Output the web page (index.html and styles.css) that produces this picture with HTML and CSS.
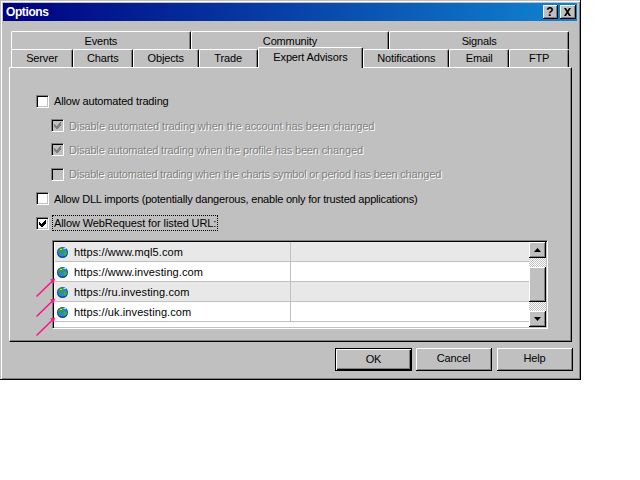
FILE: index.html
```html
<!DOCTYPE html>
<html lang="en">
<head>
<meta charset="utf-8">
<title>Options</title>
<link rel="stylesheet" href="styles.css">
</head>
<body>
<svg class="defs" width="0" height="0">
  <symbol id="globe" viewBox="0 0 11 11">
    <circle cx="5.500" cy="5.500" r="5.500" fill="#0f4a96"/>
    <circle cx="5.500" cy="5" r="4.500" fill="#2f86d6"/>
    <path d="M3 1h3v1l1 1-1 2H5v2L3 6 2 4V2.500z" fill="#2f9e2f"/>
    <path d="M7 5h3v2L8 9H7z" fill="#3fae38"/>
    <path d="M6 1h3v1H7z" fill="#a8dcf4"/>
    <path d="M3 2h2v1H3z" fill="#bfe36a"/>
  </symbol>
</svg>
<div class="window">
  <div class="titlebar">
    <span class="title">Options</span>
    <div class="caption-buttons">
      <span class="caption-btn caption-help">?</span>
      <span class="caption-btn caption-close">
        <svg width="9" height="8" viewBox="0 0 9 8"><path d="M1 0h2l1.500 2.500L6 0h2L5.500 4 8 8H6L4.500 5.500 3 8H1l2.500-4z" fill="#000"/></svg>
      </span>
    </div>
  </div>
  <div class="tabs">
    <div class="tab-row tab-row-back">
      <div class="tab w-events">Events</div>
      <div class="tab w-community">Community</div>
      <div class="tab w-signals">Signals</div>
    </div>
    <div class="tab-row">
      <div class="tab w-server">Server</div>
      <div class="tab w-charts">Charts</div>
      <div class="tab w-objects">Objects</div>
      <div class="tab w-trade">Trade</div>
      <div class="tab tab-active">Expert Advisors</div>
      <div class="tab w-notifications">Notifications</div>
      <div class="tab w-email">Email</div>
      <div class="tab w-ftp">FTP</div>
    </div>
  </div>
  <div class="panel">
    <div class="option">
      <span class="check"></span><span class="sp-mid">Allow automated trading</span>
    </div>
    <div class="option option-sub option-disabled">
      <span class="check check-disabled"><svg class="tick" width="9" height="9" viewBox="0 0 9 9"><path d="M1 3h1v1h1v1h1V4h1V3h1V2h1V1h1v3H8v1H7v1H6v1H5v1H3V7H2V6H1z" fill="#808080"/></svg></span><span class="sp-loose">Disable automated trading when the account has been changed</span>
    </div>
    <div class="option option-sub option-disabled">
      <span class="check check-disabled"><svg class="tick" width="9" height="9" viewBox="0 0 9 9"><path d="M1 3h1v1h1v1h1V4h1V3h1V2h1V1h1v3H8v1H7v1H6v1H5v1H3V7H2V6H1z" fill="#808080"/></svg></span><span class="sp-mid">Disable automated trading when the profile has been changed</span>
    </div>
    <div class="option option-sub option-disabled">
      <span class="check check-disabled"></span><span class="sp-tight">Disable automated trading when the charts symbol or period has been changed</span>
    </div>
    <div class="option">
      <span class="check"></span><span class="sp-tight">Allow DLL imports (potentially dangerous, enable only for trusted applications)</span>
    </div>
    <div class="option">
      <span class="check"><svg class="tick" width="9" height="9" viewBox="0 0 9 9"><path d="M1 3h1v1h1v1h1V4h1V3h1V2h1V1h1v3H8v1H7v1H6v1H5v1H3V7H2V6H1z" fill="#000"/></svg></span><span class="focused sp-loose">Allow WebRequest for listed URL:</span>
    </div>
    <div class="list">
      <div class="rows">
        <div class="row row-alt"><span class="cell-url"><svg class="globe"><use href="#globe"/></svg>https://www.mql5.com</span><span class="cell-rest"></span></div>
        <div class="row"><span class="cell-url"><svg class="globe"><use href="#globe"/></svg>https://www.investing.com</span><span class="cell-rest"></span></div>
        <div class="row row-alt"><span class="cell-url"><svg class="globe"><use href="#globe"/></svg>https://ru.investing.com</span><span class="cell-rest"></span></div>
        <div class="row"><span class="cell-url"><svg class="globe"><use href="#globe"/></svg>https://uk.investing.com</span><span class="cell-rest"></span></div>
      </div>
      <div class="scrollbar">
        <div class="sb-btn"><svg width="7" height="4" viewBox="0 0 7 4"><path d="M3.500 0L7 4H0z" fill="#000"/></svg></div>
        <div class="sb-track sb-track-top"></div>
        <div class="sb-btn sb-thumb"></div>
        <div class="sb-track sb-track-bottom"></div>
        <div class="sb-btn"><svg width="7" height="4" viewBox="0 0 7 4"><path d="M0 0h7L3.500 4z" fill="#000"/></svg></div>
      </div>
    </div>
  </div>
  <div class="footer">
    <div class="btn btn-default">OK</div>
    <div class="btn">Cancel</div>
    <div class="btn">Help</div>
  </div>
  <svg class="arrows" width="30" height="70" viewBox="0 0 30 70">
    <g fill="#ff1080">
      <path d="M2.500 21.500L20 4.500" fill="none" stroke="#ff1080" stroke-width="1.500"/><path d="M21 3.500l-5 1 4 4z"/>
      <path d="M2.500 41.500L20 24.500" fill="none" stroke="#ff1080" stroke-width="1.500"/><path d="M21 23.500l-5 1 4 4z"/>
      <path d="M2.500 60.500L20 43.500" fill="none" stroke="#ff1080" stroke-width="1.500"/><path d="M21 42.500l-5 1 4 4z"/>
    </g>
  </svg>
</div>
</body>
</html>
```

FILE: styles.css
```css
* { box-sizing: border-box; }
html, body { margin: 0; padding: 0; background: #fff; }
body {
  font-family: "Liberation Sans", Arial, sans-serif;
  font-size: 11px;
  color: #000;
  letter-spacing: -.15px;
}
.defs { display: block; height: 0; }
.window {
  position: relative;
  width: 581px;
  height: 380px;
  padding: 3px;
  background: #c0c0c0;
  border-right: 1px solid #000;
  border-bottom: 1px solid #000;
  box-shadow: inset 1px 1px 0 #c0c0c0, inset 2px 2px 0 #fff, inset -1px -1px 0 #808080;
}
.titlebar {
  display: flex;
  align-items: center;
  justify-content: space-between;
  height: 18px;
  padding: 0 1px 0 3px;
  background: linear-gradient(90deg, #000080, #1084d0);
  color: #fff;
  font-weight: bold;
  font-size: 12px;
  letter-spacing: -.4px;
}
.caption-buttons { display: flex; gap: 2px; }
.caption-btn {
  display: flex;
  align-items: center;
  justify-content: center;
  width: 16px;
  height: 14px;
  background: #c0c0c0;
  color: #000;
  font-size: 12px;
  letter-spacing: 0;
  border-right: 1px solid #000;
  border-bottom: 1px solid #000;
  box-shadow: inset 1px 1px 0 #fff, inset -1px -1px 0 #808080;
}
.caption-help { width: 15px; }
.tabs { margin-top: 10px; padding: 0 8px; }
.tab-row { display: flex; height: 18px; }
.tab {
  display: flex;
  align-items: center;
  justify-content: center;
  height: 18px;
  background: #c0c0c0;
  border-left: 1px solid #fff;
  border-top: 1px solid #fff;
  border-right: 1px solid #000;
  border-top-left-radius: 2px;
  border-top-right-radius: 2px;
  box-shadow: inset -1px 0 0 #808080;
  padding-bottom: 1px;
}
.tab-row-back .tab { padding-bottom: 0; padding-top: 1px; }
.w-events { width: 180px; }
.w-community { width: 199px; }
.w-signals { width: 180px; }
.w-server { width: 62px; }
.w-charts { width: 60px; }
.w-objects { width: 66px; }
.w-trade { width: 59px; }
.w-notifications { width: 86px; }
.w-email { width: 60px; }
.w-ftp { width: 60px; }
.tab-active {
  position: relative;
  z-index: 1;
  width: 106px;
  height: 21px;
  margin-top: -2px;
  padding-bottom: 3px;
}
.panel {
  width: 563px;
  height: 275px;
  margin-left: 6px;
  padding: 21px 0 0 26px;
  background: #c0c0c0;
  border-left: 1px solid #fff;
  border-top: 1px solid #fff;
  border-right: 1px solid #000;
  border-bottom: 1px solid #000;
  box-shadow: inset -1px -1px 0 #808080;
}
.option {
  display: flex;
  align-items: center;
  gap: 5px;
  height: 24.400px;
}
.sp-loose { letter-spacing: -.1px; }
.sp-mid { letter-spacing: -.15px; }
.sp-tight { letter-spacing: -.2px; }
.option-sub { padding-left: 15px; }
.option-disabled { color: #808080; text-shadow: 1px 1px 0 #fff; }
.check {
  display: flex;
  align-items: center;
  justify-content: center;
  flex: none;
  width: 13px;
  height: 13px;
  background: #fff;
  border: 1px solid;
  border-color: #808080 #fff #fff #808080;
  box-shadow: inset 1px 1px 0 #000, inset -1px -1px 0 #c0c0c0;
}
.check-disabled { background: #c0c0c0; box-shadow: inset 1px 1px 0 #000; }
.tick { display: block; }
.focused {
  margin-left: -1px;
  padding: 1px;
  outline: 1px dotted #000;
  outline-offset: 0;
}
.list {
  display: flex;
  width: 496px;
  height: 89px;
  margin: 5px 0 0 16px;
  padding: 1px 1px 1px 2px;
  background: #fff;
  border: 1px solid;
  border-color: #808080 #fff #fff #808080;
  box-shadow: inset 1px 1px 0 #000, inset -1px -1px 0 #c0c0c0;
}
.rows { flex: 1; background: #fff; }
.row {
  display: flex;
  height: 20px;
  border-bottom: 1px solid #c0c0c0;
  letter-spacing: .1px;
}
.row-alt { background: #e8e8e8; }
.cell-url {
  display: flex;
  align-items: center;
  gap: 6px;
  width: 236px;
  padding: 0 0 0 2px;
  border-right: 1px solid #c0c0c0;
}
.cell-rest { flex: 1; }
.globe { display: block; flex: none; width: 11px; height: 11px; margin-top: 1px; }
.scrollbar {
  display: flex;
  flex-direction: column;
  flex: none;
  width: 17px;
}
.sb-btn {
  display: flex;
  align-items: center;
  justify-content: center;
  flex: none;
  height: 16px;
  background: #c0c0c0;
  border-right: 1px solid #000;
  border-bottom: 1px solid #000;
  box-shadow: inset 1px 1px 0 #fff, inset -1px -1px 0 #808080;
}
.sb-thumb { height: 35px; }
.sb-track {
  height: 9px;
  background-color: #fff;
  background-image: conic-gradient(#c0c0c0 25%, #fff 0 50%, #c0c0c0 0 75%, #fff 0);
  background-size: 2px 2px;
}
.footer {
  display: flex;
  justify-content: flex-end;
  gap: 5px;
  margin-top: 6px;
  padding-right: 4px;
}
.btn {
  display: flex;
  align-items: center;
  justify-content: center;
  width: 76px;
  height: 23px;
  padding-bottom: 2px;
  background: #c0c0c0;
  border-right: 1px solid #000;
  border-bottom: 1px solid #000;
  box-shadow: inset 1px 1px 0 #fff, inset -1px -1px 0 #808080;
}
.btn-default {
  width: 77px;
  margin-right: -1px;
  border: 1px solid #000;
  box-shadow: inset 1px 1px 0 #fff, inset -1px -1px 0 #000, inset -2px -2px 0 #808080;
}
.arrows {
  position: absolute;
  left: 34px;
  top: 275px;
}
```
